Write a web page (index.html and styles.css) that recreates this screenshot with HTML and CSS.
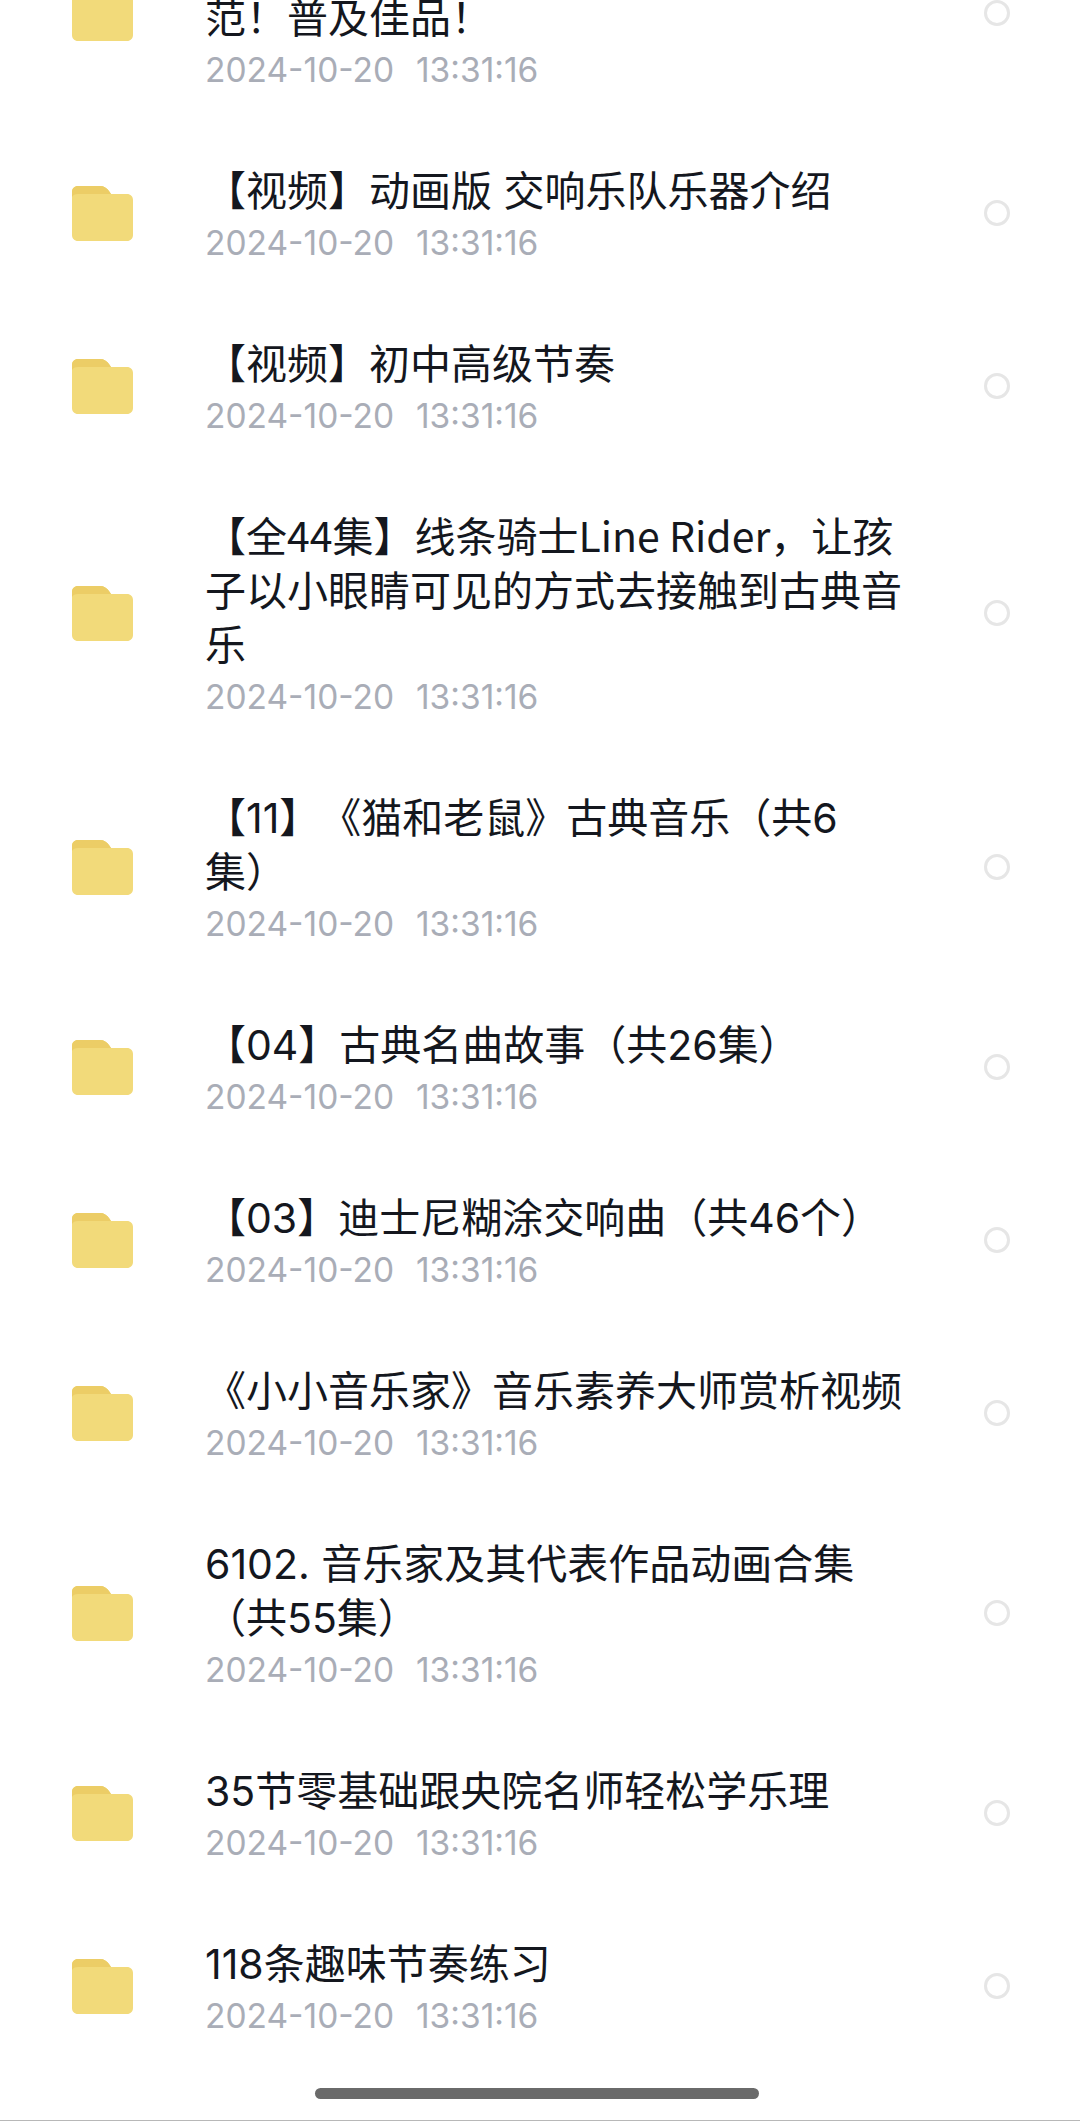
FILE: index.html
```html
<!DOCTYPE html>
<html lang="zh-CN">
<head>
    <meta charset="UTF-8">
    <meta name="viewport" content="width=device-width, initial-scale=1.0">
    <title>文件列表</title>
    <link rel="stylesheet" href="styles.css">
</head>
<body>
<svg class="defs" width="0" height="0">
    <symbol id="folder" viewBox="0 0 61 55">
        <path fill="#f2da7a" d="M6 0h22c4 0 7 2 9 5l2 3h16c3.500 0 6 2.500 6 6v35c0 3.500-2.500 6-6 6H6c-3.500 0-6-2.500-6-6V6c0-3.500 2.500-6 6-6z"/>
        <path fill="#eccd66" d="M6 0h22c4 0 7 2 9 5l2 3H6c-3 0-5 1-6 3V6c0-3.500 2.500-6 6-6z"/>
    </symbol>
</svg>
<div id="wrap">
    <ul id="list">
        <li class="row">
            <svg class="folder"><use href="#folder"/></svg>
            <div class="info">
                <p class="title">&nbsp;<br>范！普及佳品！</p>
                <p class="time">2024-10-20&nbsp; 13:31:16</p>
            </div>
            <a class="check"></a>
        </li>
        <li class="row">
            <svg class="folder"><use href="#folder"/></svg>
            <div class="info">
                <p class="title">【视频】动画版 交响乐队乐器介绍</p>
                <p class="time">2024-10-20&nbsp; 13:31:16</p>
            </div>
            <a class="check"></a>
        </li>
        <li class="row">
            <svg class="folder"><use href="#folder"/></svg>
            <div class="info">
                <p class="title">【视频】初中高级节奏</p>
                <p class="time">2024-10-20&nbsp; 13:31:16</p>
            </div>
            <a class="check"></a>
        </li>
        <li class="row">
            <svg class="folder"><use href="#folder"/></svg>
            <div class="info">
                <p class="title"><span class="narrow">【全44集】线条骑士Line Rider，让孩</span><br>子以小眼睛可见的方式去接触到古典音<br>乐</p>
                <p class="time">2024-10-20&nbsp; 13:31:16</p>
            </div>
            <a class="check"></a>
        </li>
        <li class="row">
            <svg class="folder"><use href="#folder"/></svg>
            <div class="info">
                <p class="title">【11】《猫和老鼠》古典音乐（共6<br>集）</p>
                <p class="time">2024-10-20&nbsp; 13:31:16</p>
            </div>
            <a class="check"></a>
        </li>
        <li class="row">
            <svg class="folder"><use href="#folder"/></svg>
            <div class="info">
                <p class="title">【04】古典名曲故事（共26集）</p>
                <p class="time">2024-10-20&nbsp; 13:31:16</p>
            </div>
            <a class="check"></a>
        </li>
        <li class="row">
            <svg class="folder"><use href="#folder"/></svg>
            <div class="info">
                <p class="title">【03】迪士尼糊涂交响曲（共46个）</p>
                <p class="time">2024-10-20&nbsp; 13:31:16</p>
            </div>
            <a class="check"></a>
        </li>
        <li class="row">
            <svg class="folder"><use href="#folder"/></svg>
            <div class="info">
                <p class="title">《小小音乐家》音乐素养大师赏析视频</p>
                <p class="time">2024-10-20&nbsp; 13:31:16</p>
            </div>
            <a class="check"></a>
        </li>
        <li class="row">
            <svg class="folder"><use href="#folder"/></svg>
            <div class="info">
                <p class="title">6102. 音乐家及其代表作品动画合集<br>（共55集）</p>
                <p class="time">2024-10-20&nbsp; 13:31:16</p>
            </div>
            <a class="check"></a>
        </li>
        <li class="row">
            <svg class="folder"><use href="#folder"/></svg>
            <div class="info">
                <p class="title">35节零基础跟央院名师轻松学乐理</p>
                <p class="time">2024-10-20&nbsp; 13:31:16</p>
            </div>
            <a class="check"></a>
        </li>
        <li class="row">
            <svg class="folder"><use href="#folder"/></svg>
            <div class="info">
                <p class="title">118条趣味节奏练习</p>
                <p class="time">2024-10-20&nbsp; 13:31:16</p>
            </div>
            <a class="check"></a>
        </li>
    </ul>
    <div class="home-bar"></div>
</div>
</body>
</html>
```

FILE: styles.css
```css
html, body {
    margin: 0;
    background: #fff;
}
ul, p {
    margin: 0;
    padding: 0;
    list-style: none;
}
.defs {
    position: absolute;
}
#wrap {
    position: relative;
    width: 1080px;
    height: 2121px;
    box-sizing: border-box;
    overflow: hidden;
    border-bottom: 1px solid #b8b8b8;
}
#list {
    margin-top: -100px;
}
.row {
    display: flex;
    align-items: center;
    padding: 38px 0 33px 72px;
}
.folder {
    flex: none;
    width: 61px;
    height: 55px;
    margin-top: -6px;
}
.info {
    flex: 1;
    margin-left: 72px;
}
.title {
    margin: -1px 0 1px;
    font: 400 41px/54px Inter, "Noto Sans CJK SC", "Noto Sans", sans-serif;
    color: #14171e;
    white-space: nowrap;
    text-spacing-trim: space-all;
}
.narrow {
    font-family: "Noto Sans CJK SC", sans-serif;
    line-height: 0;
}
.time {
    font: 400 33.500px/48px Inter, "Noto Sans", sans-serif;
    word-spacing: 1.500px;
    color: #a9adb7;
    white-space: nowrap;
}
.check {
    flex: none;
    width: 20px;
    height: 20px;
    margin: -6px 70px 0 0;
    border: 3px solid #e6e6e6;
    border-radius: 50%;
}
.home-bar {
    position: absolute;
    left: 315px;
    bottom: 21px;
    width: 444px;
    height: 11px;
    background: #6a6a6a;
    border-radius: 6px;
}
```
